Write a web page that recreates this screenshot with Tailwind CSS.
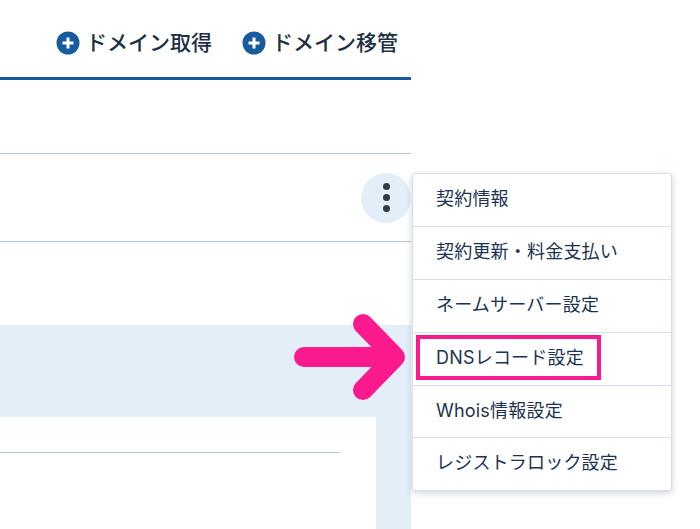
<!DOCTYPE html>
<html lang="ja">
<head>
<meta charset="utf-8">
<script src="https://cdn.jsdelivr.net/npm/@tailwindcss/browser@4"></script>
</head>
<body class="bg-white font-['Inter','Noto_Sans_CJK_JP',sans-serif]">
<div class="relative w-[700px] h-[529px] overflow-hidden">
  <div class="w-[411px]">
    <header class="h-[80px] border-b-[3px] border-[#175a9e] flex items-center justify-end gap-[30px] pr-[13px] pt-[8px]">
      <a class="flex items-center gap-[6px] text-[21px] font-medium text-[#1b2f45]">
        <svg class="w-[24px] h-[24px]" viewBox="0 0 24 24"><circle cx="12" cy="12" r="11.5" fill="#175a9e"/><path d="M12 6.5v11M6.5 12h11" stroke="#fff" stroke-width="3"/></svg>
        ドメイン取得
      </a>
      <a class="flex items-center gap-[6px] text-[21px] font-medium text-[#1b2f45]">
        <svg class="w-[24px] h-[24px]" viewBox="0 0 24 24"><circle cx="12" cy="12" r="11.5" fill="#175a9e"/><path d="M12 6.5v11M6.5 12h11" stroke="#fff" stroke-width="3"/></svg>
        ドメイン移管
      </a>
    </header>
    <div class="h-[74px] border-b border-[#b4c4d4]"></div>
    <div class="h-[88px] border-b border-[#b4c4d4] flex items-center justify-end">
      <button class="w-[50px] h-[50px] rounded-full bg-[#e3eef9] flex flex-col items-center justify-center gap-[4px]">
        <span class="w-[7px] h-[7px] rounded-full bg-[#333b45]"></span>
        <span class="w-[7px] h-[7px] rounded-full bg-[#333b45]"></span>
        <span class="w-[7px] h-[7px] rounded-full bg-[#333b45]"></span>
      </button>
    </div>
    <div class="mt-[83px] h-[204px] bg-[#e3eef9] pt-[92px] pr-[35px]">
      <div class="h-[112px] bg-white pt-[35px] pr-[36px]">
        <div class="border-t border-[#b4c4d4]"></div>
      </div>
    </div>
  </div>

  <ul class="absolute left-[412px] top-[173px] w-[260px] bg-white rounded-[3px] border border-[#d5e0ec] shadow-[0_2px_6px_rgba(60,80,110,0.25)] text-[18px] tracking-[0.2px] leading-[24px] text-[#1b3350] divide-y divide-[#d5e0ec]">
    <li class="h-[53px] flex items-center pl-[23px] pb-[3px]">契約情報</li>
    <li class="h-[53px] flex items-center pl-[23px] pb-[3px]">契約更新・料金支払い</li>
    <li class="h-[53px] flex items-center pl-[23px] pb-[3px]">ネームサーバー設定</li>
    <li class="h-[53px] flex items-center pl-[23px] pb-[2px]">DNSレコード設定</li>
    <li class="h-[52px] flex items-center pl-[23px] pb-[1px]">Whois情報設定</li>
    <li class="h-[52px] flex items-center pl-[23px] pb-[2px]">レジストラロック設定</li>
  </ul>

  <div class="absolute left-[416px] top-[335px] w-[185px] h-[45px] border-[4px] border-[#fb1a8e]"></div>

  <svg class="absolute left-[290px] top-[310px] w-[124px] h-[96px]" viewBox="0 0 124 96" fill="none">
    <path d="M14 47H105M73 14L105 47L73 80" stroke="#fb1a8e" stroke-width="20" stroke-linecap="round" stroke-linejoin="round"/>
  </svg>
</div>
</body>
</html>
